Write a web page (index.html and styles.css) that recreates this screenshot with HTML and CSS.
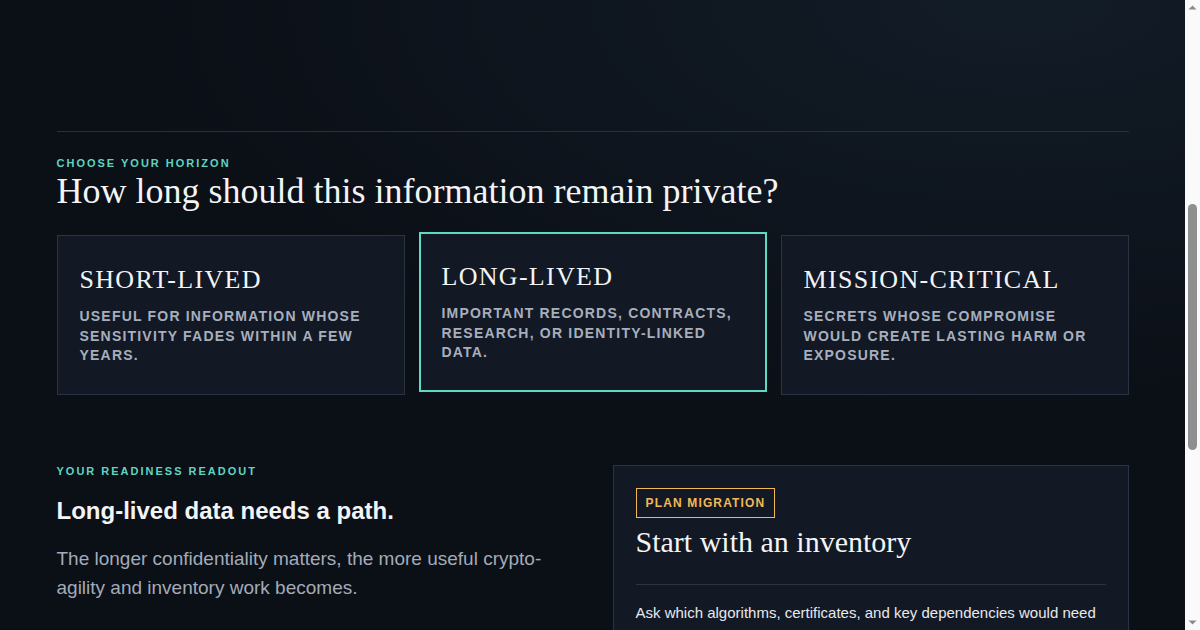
FILE: index.html
```html
<!DOCTYPE html>
<html lang="en">
<head>
<meta charset="utf-8">
<title>Horizon</title>
<link rel="stylesheet" href="styles.css">
</head>
<body>
<main class="wrap">
  <section class="horizon">
    <p class="eyebrow">Choose your horizon</p>
    <h2 class="title">How long should this information remain private?</h2>
    <div class="cards">
      <div class="card">
        <h3 class="card-title">Short-lived</h3>
        <p class="card-text">Useful for information whose sensitivity fades within a few years.</p>
      </div>
      <div class="card active">
        <h3 class="card-title">Long-lived</h3>
        <p class="card-text">Important records, contracts, research, or identity-linked data.</p>
      </div>
      <div class="card">
        <h3 class="card-title">Mission-critical</h3>
        <p class="card-text">Secrets whose compromise would create lasting harm or exposure.</p>
      </div>
    </div>
  </section>
  <section class="readout">
    <div class="readout-left">
      <p class="eyebrow">Your readiness readout</p>
      <h3 class="readout-title">Long-lived data needs a path.</h3>
      <p class="readout-text">The longer confidentiality matters, the more useful crypto-agility and inventory work becomes.</p>
    </div>
    <div class="plan">
      <span class="badge">Plan migration</span>
      <h3 class="plan-title">Start with an inventory</h3>
      <hr class="divider">
      <p class="plan-text">Ask which algorithms, certificates, and key dependencies would need to change first, and which systems hold data that must stay confidential the longest.</p>
      <p class="plan-text">Build a crypto inventory, prioritise long-lived data flows, and prepare vendors for a hybrid transition.</p>
    </div>
  </section>
  <div class="tail"></div>
</main>
<div class="scrollbar" aria-hidden="true">
  <svg class="arrow" width="15" height="15" viewBox="0 0 15 15"><path d="M3.5 9.5 L7.5 5.5 L11.5 9.5 Z" fill="#8a8a8a"/></svg>
  <div class="track"><div class="thumb"></div></div>
  <svg class="arrow" width="15" height="15" viewBox="0 0 15 15"><path d="M3.5 5.5 L7.5 9.5 L11.5 5.5 Z" fill="#8a8a8a"/></svg>
</div>
</body>
</html>
```
FILE: styles.css
```css
html {
  background: #0b0f16;
}
body {
  margin: 0;
  padding-right: 15px;
  min-height: 1500px;
  background: radial-gradient(ellipse 900px 420px at 85% 0%, #121c27 0%, rgba(18,28,39,0) 100%), #0b0f16;
  font-family: "Liberation Sans", Arial, sans-serif;
  color: #eef1f5;
}
.wrap {
  max-width: 1072px;
  margin: 0 auto;
  padding-top: 131px;
}
.horizon {
  border-top: 1px solid #2a303b;
  padding-top: 24px;
}
.eyebrow {
  margin: 0;
  font-size: 11px;
  font-weight: 700;
  letter-spacing: 2px;
  text-transform: uppercase;
  color: #5fd4c1;
  line-height: 14px;
}
.title {
  margin: 0;
  font-family: "Liberation Serif", "Times New Roman", serif;
  font-weight: 400;
  font-size: 36px;
  line-height: 42px;
  color: #f3f4f6;
}
.cards {
  display: grid;
  grid-template-columns: repeat(3, 1fr);
  gap: 14px;
  margin-top: 23px;
}
.card {
  background: #121824;
  border: 1px solid #2b3342;
  height: 160px;
  box-sizing: border-box;
  padding: 28px 22px 0;
}
.card.active {
  border: 2px solid #5fd8c4;
  transform: translateY(-3px);
  padding: 27px 21px 0;
}
.card-title {
  margin: 0;
  font-family: "Liberation Serif", "Times New Roman", serif;
  font-weight: 400;
  font-size: 26px;
  letter-spacing: 1.3px;
  text-transform: uppercase;
  line-height: 32px;
  color: #f3f4f6;
}
.card-text {
  margin: 11px 0 0;
  font-size: 14px;
  font-weight: 700;
  letter-spacing: 1.2px;
  line-height: 19.5px;
  text-transform: uppercase;
  color: #a7afbd;
}
.readout {
  display: grid;
  grid-template-columns: 1fr 516px;
  gap: 56px;
  margin-top: 69px;
}
.readout-title {
  margin: 18px 0 0;
  font-size: 24px;
  font-weight: 700;
  line-height: 30px;
  color: #f3f4f6;
}
.readout-text {
  margin: 18px 0 0;
  font-size: 19px;
  line-height: 29px;
  color: #a3abb9;
}
.plan {
  margin-top: 1px;
  background: #121824;
  border: 1px solid #2b3342;
  padding: 22px 22px 24px;
}
.badge {
  display: inline-block;
  border: 1px solid #f2b857;
  color: #f2b857;
  font-size: 12px;
  font-weight: 700;
  letter-spacing: 1.15px;
  text-transform: uppercase;
  padding: 7px 9px;
  line-height: 14px;
}
.plan-title {
  margin: 7px 0 0;
  font-family: "Liberation Serif", "Times New Roman", serif;
  font-weight: 400;
  font-size: 30px;
  line-height: 34px;
  color: #f3f4f6;
}
.divider {
  border: 0;
  border-top: 1px solid #2b3342;
  margin: 25px 0 0;
}
.plan-text {
  margin: 16px 0 0;
  font-size: 15px;
  line-height: 24px;
  color: #e6e9ee;
}
.tail {
  height: 400px;
}
.scrollbar {
  position: fixed;
  top: 0;
  right: 0;
  width: 15px;
  height: 100vh;
  background: #fafafa;
  display: flex;
  flex-direction: column;
}
.arrow {
  display: block;
  flex: none;
}
.track {
  flex: 1;
  padding-top: 189px;
}
.thumb {
  width: 9px;
  height: 246px;
  margin-left: 3px;
  border-radius: 5px;
  background: #8f8f8f;
}
```
